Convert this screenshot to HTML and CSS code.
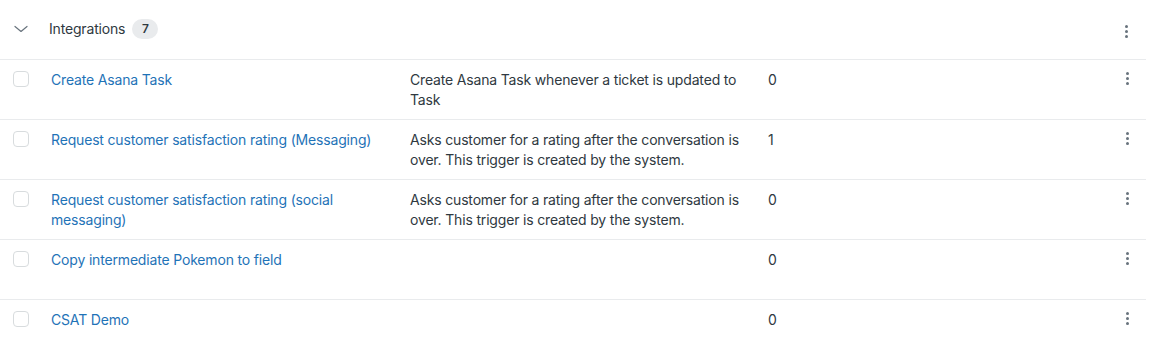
FILE: index.html
```html
<!DOCTYPE html>
<html lang="en">
<head>
    <meta charset="UTF-8">
    <meta name="viewport" content="width=device-width, initial-scale=1.0">
    <title>Triggers</title>
    <link rel="stylesheet" href="styles.css">
</head>
<body>
    <div class="group">
        <div class="group-head">
            <span class="chevron">
                <svg width="14" height="8" viewBox="0 0 14 8"><path d="M1 1.5l6 5 6-5" fill="none" stroke="#68737d" stroke-width="1.2" stroke-linecap="round" stroke-linejoin="round"/></svg>
            </span>
            <span class="group-title">Integrations</span>
            <span class="badge">7</span>
            <span class="kebab"><i></i><i></i><i></i></span>
        </div>

        <div class="row">
            <div class="cell check"><span class="box"></span></div>
            <div class="cell name"><a href="#">Create Asana Task</a></div>
            <div class="cell desc">Create Asana Task whenever a ticket is updated to Task</div>
            <div class="cell count">0</div>
            <div class="cell more"><span class="kebab"><i></i><i></i><i></i></span></div>
        </div>
        <div class="row">
            <div class="cell check"><span class="box"></span></div>
            <div class="cell name"><a href="#">Request customer satisfaction rating (Messaging)</a></div>
            <div class="cell desc">Asks customer for a rating after the conversation is over. This trigger is created by the system.</div>
            <div class="cell count">1</div>
            <div class="cell more"><span class="kebab"><i></i><i></i><i></i></span></div>
        </div>
        <div class="row">
            <div class="cell check"><span class="box"></span></div>
            <div class="cell name"><a href="#">Request customer satisfaction rating (social messaging)</a></div>
            <div class="cell desc">Asks customer for a rating after the conversation is over. This trigger is created by the system.</div>
            <div class="cell count">0</div>
            <div class="cell more"><span class="kebab"><i></i><i></i><i></i></span></div>
        </div>
        <div class="row">
            <div class="cell check"><span class="box"></span></div>
            <div class="cell name"><a href="#">Copy intermediate Pokemon to field</a></div>
            <div class="cell desc"></div>
            <div class="cell count">0</div>
            <div class="cell more"><span class="kebab"><i></i><i></i><i></i></span></div>
        </div>
        <div class="row">
            <div class="cell check"><span class="box"></span></div>
            <div class="cell name"><a href="#">CSAT Demo</a></div>
            <div class="cell desc"></div>
            <div class="cell count">0</div>
            <div class="cell more"><span class="kebab"><i></i><i></i><i></i></span></div>
        </div>
    </div>
</body>
</html>
```

FILE: styles.css
```css
* {
    padding: 0;
    margin: 0;
    box-sizing: border-box;
}

body {
    font-family: Inter, "Liberation Sans", sans-serif;
    font-size: 14px;
    line-height: 20px;
    letter-spacing: -0.17px;
    color: #2f3941;
    background: #fff;
}

.group {
    width: 1146px;
}

.group-head {
    height: 60px;
    display: flex;
    align-items: center;
    border-bottom: 1px solid #e9ebed;
    padding-left: 14px;
}

.chevron {
    display: flex;
    width: 14px;
    margin-top: -2px;
}

.group-title {
    margin-left: 21px;
    margin-top: -1px;
}

.badge {
    margin-left: 7px;
    margin-top: -1px;
    min-width: 26px;
    height: 20px;
    border-radius: 10px;
    background: #e9ebed;
    font-size: 12px;
    font-weight: 600;
    line-height: 20px;
    text-align: center;
}

.group-head .kebab {
    margin-left: auto;
    margin-right: 18px;
    margin-top: 4px;
}

.row {
    display: grid;
    grid-template-columns: 39px 359px 358px 1fr 38px;
    min-height: 60px;
    border-bottom: 1px solid #e9ebed;
}

.row:last-child {
    border-bottom: none;
}

.cell {
    padding: 10px 12px 9px;
}

.check {
    padding: 11px 0 0 13px;
}

.box {
    display: block;
    width: 16px;
    height: 16px;
    border: 1px solid #d8dcde;
    border-radius: 4px;
    background: #fff;
}

.name a {
    color: #1f73b7;
    text-decoration: none;
}

.more {
    padding: 12px 0 0 0;
    display: flex;
    justify-content: center;
}

.kebab {
    display: flex;
    flex-direction: column;
    gap: 2px;
    width: 3px;
}

.kebab i {
    display: block;
    width: 3px;
    height: 3px;
    border-radius: 50%;
    background: #68737d;
}
```
